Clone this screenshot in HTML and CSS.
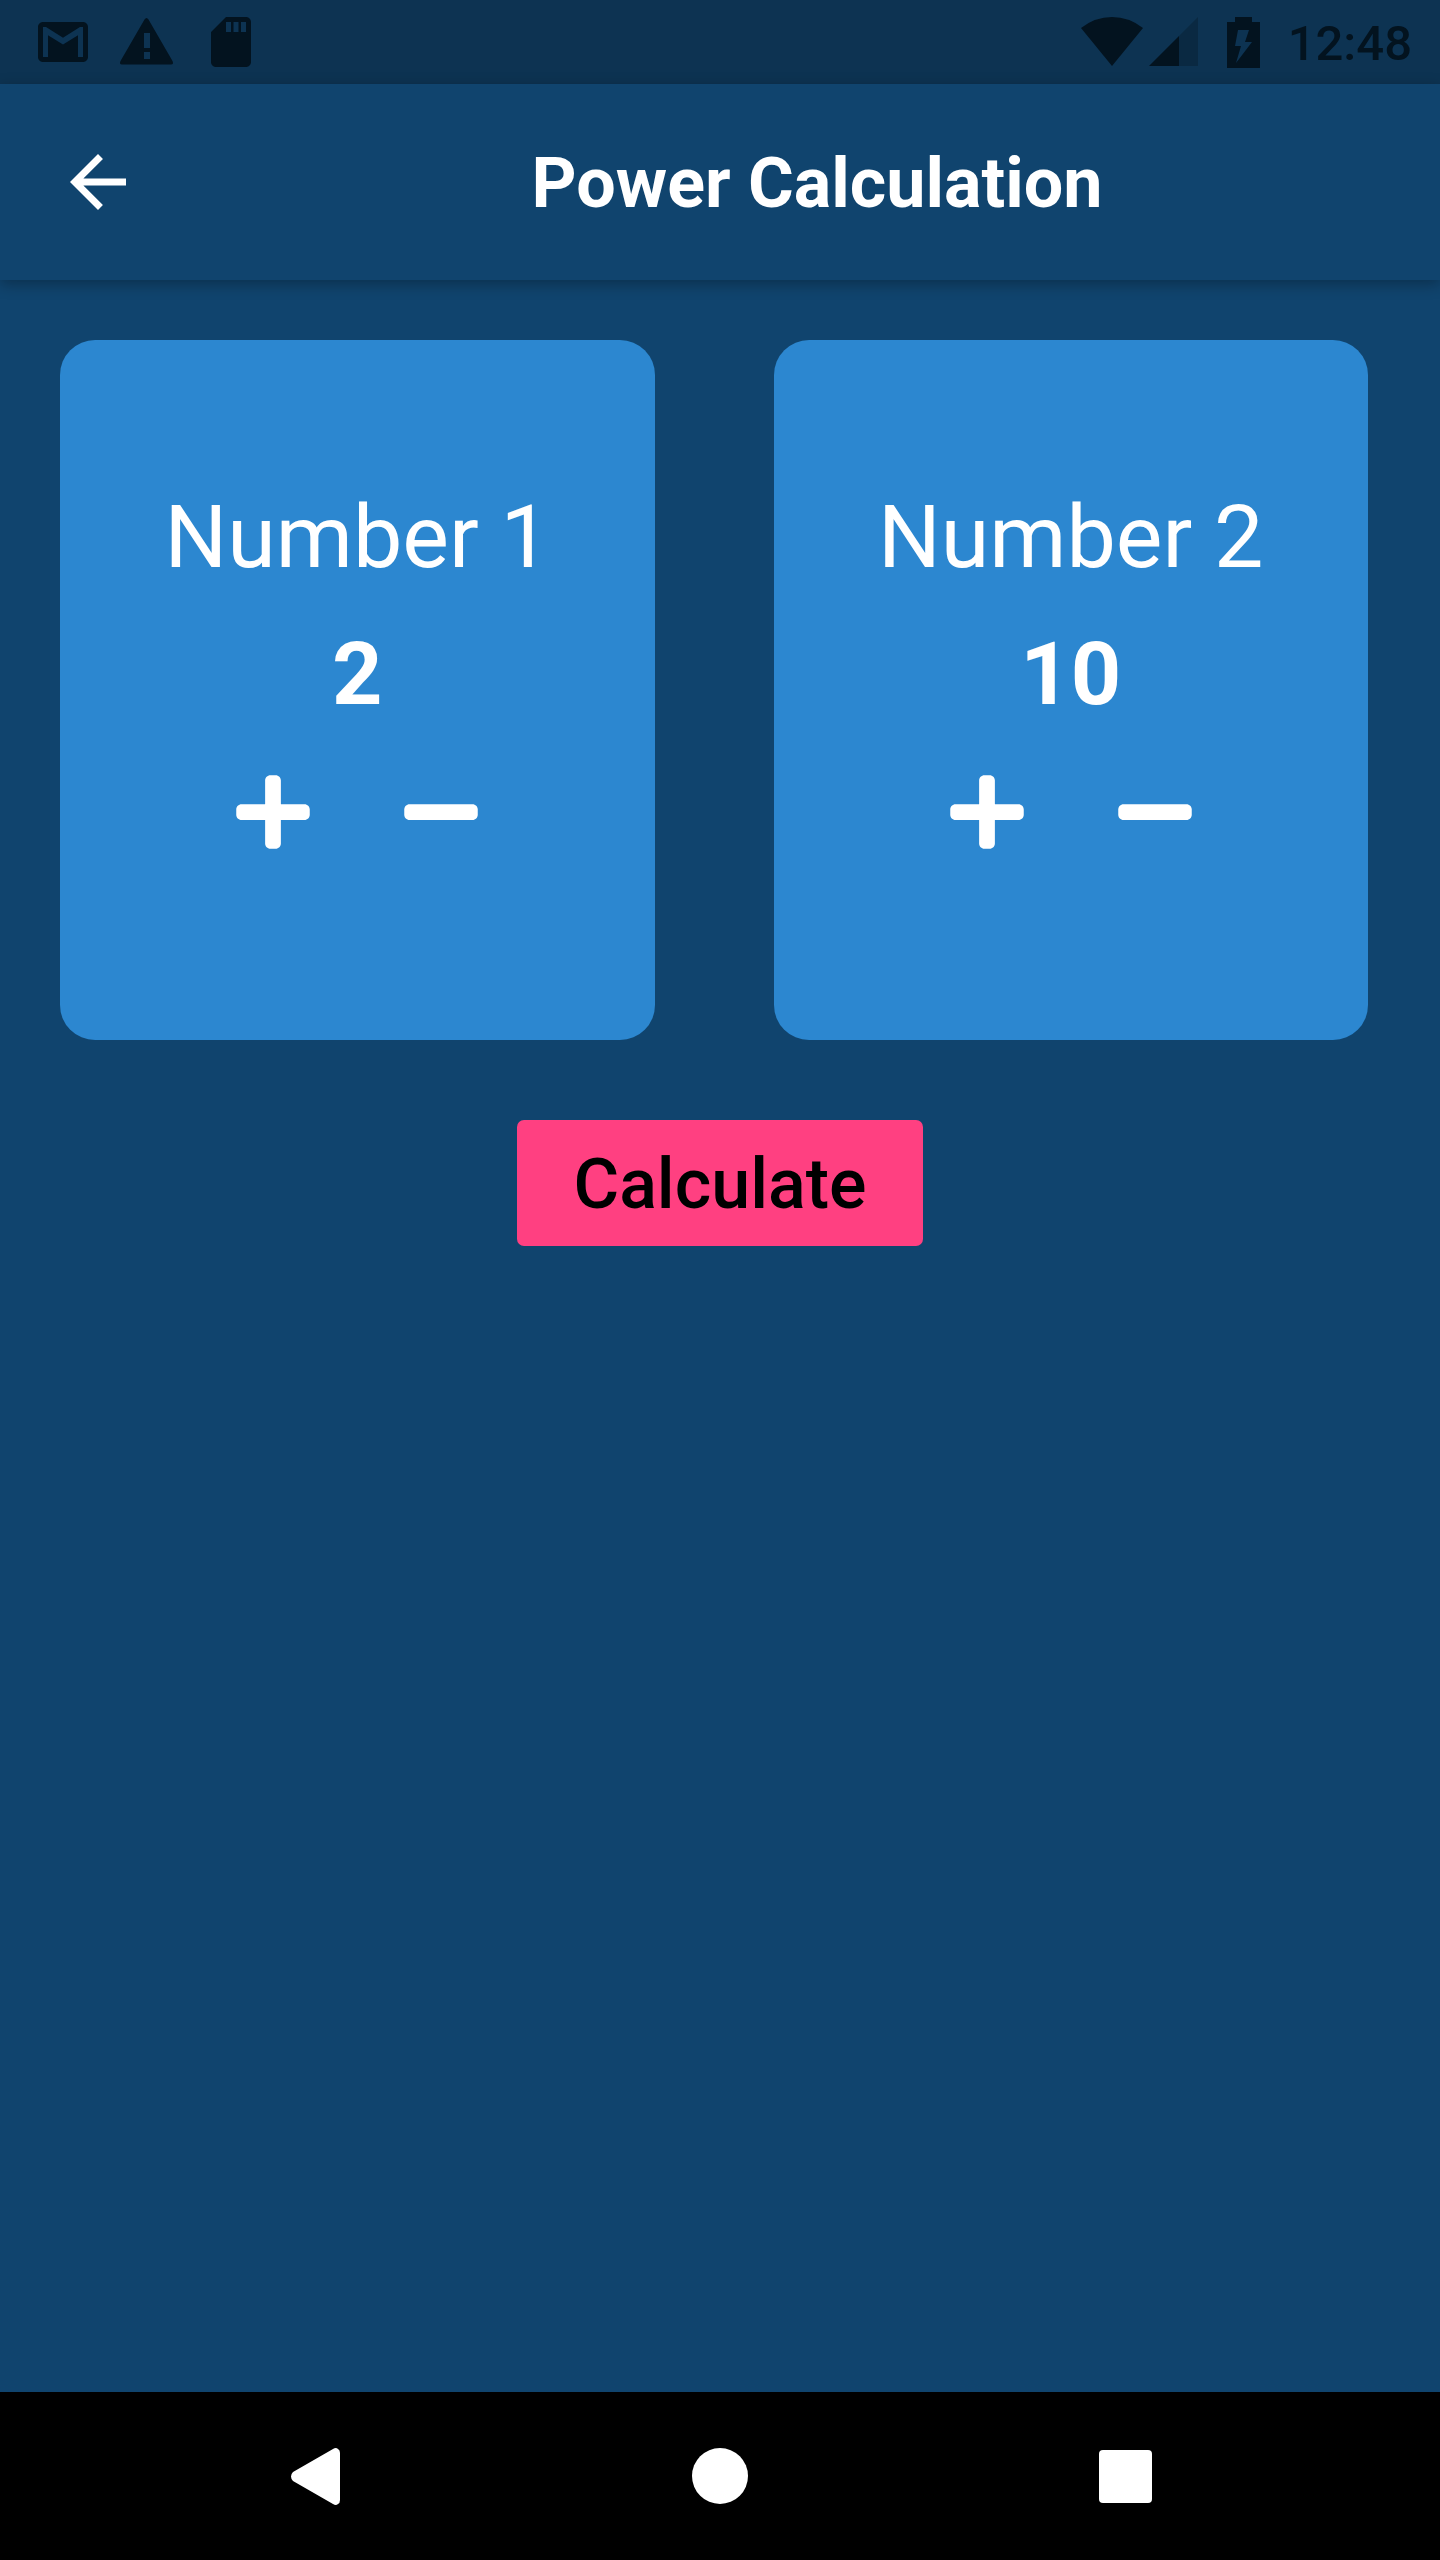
FILE: index.html
```html
<!DOCTYPE html>
<html lang="en">
<head>
<meta charset="utf-8">
<meta name="viewport" content="width=device-width, initial-scale=1">
<title>Power Calculation</title>
<link rel="stylesheet" href="styles.css">
</head>
<body>
<div class="status-bar">
  <div class="notifications">
    <svg class="notification-icon" viewBox="0 0 24 24" aria-hidden="true"><path d="M20 4H4c-1.100 0-2 .9-2 2v12c0 1.100.9 2 2 2h16c1.100 0 2-.9 2-2V6c0-1.100-.9-2-2-2zm0 14h-2V9.250L12 13 6 9.250V18H4V6h1.200l6.800 4.250L18.800 6H20v12z"/></svg>
    <svg class="notification-icon" viewBox="0 0 60 60" aria-hidden="true"><path fill-rule="evenodd" d="M27.500 7.500Q29.500 4.500 31.500 7.500L55.500 49Q57 52.500 54 52.500H5Q2 52.500 3.500 49zM27 21v15h6V21zM27 40v7h6v-7z"/></svg>
    <svg class="notification-icon" viewBox="0 0 24 24" aria-hidden="true"><path d="M18 2h-8L4.020 8 4 20c0 1.100.9 2 2 2h12c1.100 0 2-.9 2-2V4c0-1.100-.9-2-2-2zm-6 6h-2V4h2v4zm3 0h-2V4h2v4zm3 0h-2V4h2v4z"/></svg>
  </div>
  <div class="system">
    <div class="network">
      <svg class="wifi-icon" viewBox="0 0 62 50" aria-hidden="true"><path d="M0 11Q14 0 31 0T62 11L31 49z"/></svg>
      <svg class="signal-icon" viewBox="0 0 50 50" aria-hidden="true"><path opacity=".3" d="M30 19L49 0v49H30z"/><path d="M0 49L30 19v30z"/></svg>
    </div>
    <svg class="battery-icon" viewBox="0 0 33 51" aria-hidden="true"><path d="M8 0h17v5h8v46H0V5h8zM11 13L8 29h6L9 46 25 25h-7l4-12z" fill-rule="evenodd"/></svg>
    <time class="clock">12:48</time>
  </div>
</div>
<header class="app-bar">
  <button class="back-button" type="button" aria-label="Back">
    <svg class="back-icon" viewBox="0 0 24 24" aria-hidden="true"><path d="M20 11H7.830l5.590-5.590L12 4l-8 8 8 8 1.410-1.410L7.830 13H20v-2z"/></svg>
  </button>
  <h1 class="title">Power Calculation</h1>
</header>
<main class="content">
  <div class="cards">
    <section class="card">
      <h2 class="card-label" id="label-1">Number 1</h2>
      <output class="card-value" aria-labelledby="label-1">2</output>
      <div class="stepper">
        <button class="step" type="button" aria-label="Increase Number 1"><svg class="step-icon" viewBox="0 0 448 512" aria-hidden="true"><path d="M416 208H272V64c0-17.670-14.330-32-32-32h-32c-17.670 0-32 14.330-32 32v144H32c-17.670 0-32 14.330-32 32v32c0 17.670 14.330 32 32 32h144v144c0 17.670 14.330 32 32 32h32c17.670 0 32-14.330 32-32V304h144c17.670 0 32-14.330 32-32v-32c0-17.670-14.330-32-32-32z"/></svg></button>
        <button class="step" type="button" aria-label="Decrease Number 1"><svg class="step-icon" viewBox="0 0 448 512" aria-hidden="true"><path d="M416 208H32c-17.670 0-32 14.330-32 32v32c0 17.670 14.330 32 32 32h384c17.670 0 32-14.330 32-32v-32c0-17.670-14.330-32-32-32z"/></svg></button>
      </div>
    </section>
    <section class="card">
      <h2 class="card-label" id="label-2">Number 2</h2>
      <output class="card-value" aria-labelledby="label-2">10</output>
      <div class="stepper">
        <button class="step" type="button" aria-label="Increase Number 2"><svg class="step-icon" viewBox="0 0 448 512" aria-hidden="true"><path d="M416 208H272V64c0-17.670-14.330-32-32-32h-32c-17.670 0-32 14.330-32 32v144H32c-17.670 0-32 14.330-32 32v32c0 17.670 14.330 32 32 32h144v144c0 17.670 14.330 32 32 32h32c17.670 0 32-14.330 32-32V304h144c17.670 0 32-14.330 32-32v-32c0-17.670-14.330-32-32-32z"/></svg></button>
        <button class="step" type="button" aria-label="Decrease Number 2"><svg class="step-icon" viewBox="0 0 448 512" aria-hidden="true"><path d="M416 208H32c-17.670 0-32 14.330-32 32v32c0 17.670 14.330 32 32 32h384c17.670 0 32-14.330 32-32v-32c0-17.670-14.330-32-32-32z"/></svg></button>
      </div>
    </section>
  </div>
  <button class="calculate" type="button">Calculate</button>
</main>
<nav class="nav-bar" aria-label="System">
  <button class="nav-button" type="button" aria-label="Back"><svg class="nav-icon" viewBox="0 0 58 58" aria-hidden="true"><path d="M5 25L45 2Q48 0 50 2Q52 3 52 6V53Q52 56 50 57Q48 59 45 57L5 34Q3 32 3 29.500Q3 27 5 25z"/></svg></button>
  <button class="nav-button" type="button" aria-label="Home"><svg class="nav-icon" viewBox="0 0 58 58" aria-hidden="true"><circle cx="29" cy="29" r="28"/></svg></button>
  <button class="nav-button" type="button" aria-label="Recent apps"><svg class="nav-icon" viewBox="0 0 58 58" aria-hidden="true"><rect x="5" y="3" width="53" height="53" rx="4"/></svg></button>
</nav>
</body>
</html>
```
FILE: styles.css
```css
* {
  box-sizing: border-box;
}

body {
  display: flex;
  flex-direction: column;
  min-height: 100vh;
  margin: 0;
  background: #10446e;
  color: #fff;
  font-family: Roboto, "Liberation Sans", sans-serif;
}

button {
  padding: 0;
  border: 0;
  background: none;
  color: inherit;
  font: inherit;
  cursor: pointer;
}

svg {
  display: block;
  fill: currentColor;
}

.status-bar {
  display: flex;
  align-items: center;
  justify-content: space-between;
  height: 84px;
  padding: 0 28px 0 33px;
  background: #0d3352;
  color: #03131f;
}

.notifications {
  display: flex;
  gap: 24px;
}

.notification-icon {
  width: 60px;
  height: 60px;
}

.system {
  display: flex;
  align-items: center;
  gap: 28px;
}

.network {
  display: flex;
  gap: 6px;
}

.wifi-icon {
  width: 62px;
  height: 50px;
}

.signal-icon {
  width: 50px;
  height: 50px;
}

.battery-icon {
  width: 33px;
  height: 51px;
}

.clock {
  padding-top: 4px;
  font-size: 49px;
  font-weight: 500;
  line-height: 60px;
}

.app-bar {
  display: grid;
  grid-template-columns: 196px 1fr;
  align-items: center;
  height: 196px;
  background: #10446e;
  box-shadow: 0 4px 14px rgba(0, 0, 0, 0.3);
}

.back-button {
  display: grid;
  place-items: center;
  height: 196px;
}

.back-icon {
  width: 84px;
  height: 84px;
}

.title {
  margin: 0;
  padding: 2px 2px 0 0;
  font-size: 70px;
  font-weight: 700;
  line-height: 82px;
  text-align: center;
}

.content {
  display: flex;
  flex: 1;
  flex-direction: column;
  align-items: center;
  gap: 80px;
  padding: 60px 72px 60px 60px;
}

.cards {
  display: grid;
  grid-template-columns: 1fr 1fr;
  gap: 119px;
  align-self: stretch;
}

.card {
  display: flex;
  flex-direction: column;
  align-items: center;
  padding: 145px 0 144px;
  border-radius: 35px;
  background: #2c87d0;
}

.card-label,
.card-value {
  margin: 0;
  font-size: 88px;
  line-height: 103px;
}

.card-label {
  margin-bottom: 34px;
  font-weight: 400;
}

.card-value {
  margin-bottom: 3px;
  font-weight: 700;
}

.stepper {
  display: flex;
}

.step {
  display: grid;
  place-items: center;
  width: 168px;
  height: 168px;
}

.step-icon {
  width: 74px;
  height: 84px;
}

.calculate {
  margin-left: 12px;
  padding: 23px 56px 21px;
  border-radius: 7px;
  background: #ff4081;
  color: #000;
  font-size: 70px;
  font-weight: 500;
  line-height: 82px;
}

.nav-bar {
  display: flex;
  align-items: center;
  justify-content: space-between;
  height: 168px;
  padding: 0 20%;
  background: #000;
}

.nav-icon {
  width: 58px;
  height: 58px;
}
```
